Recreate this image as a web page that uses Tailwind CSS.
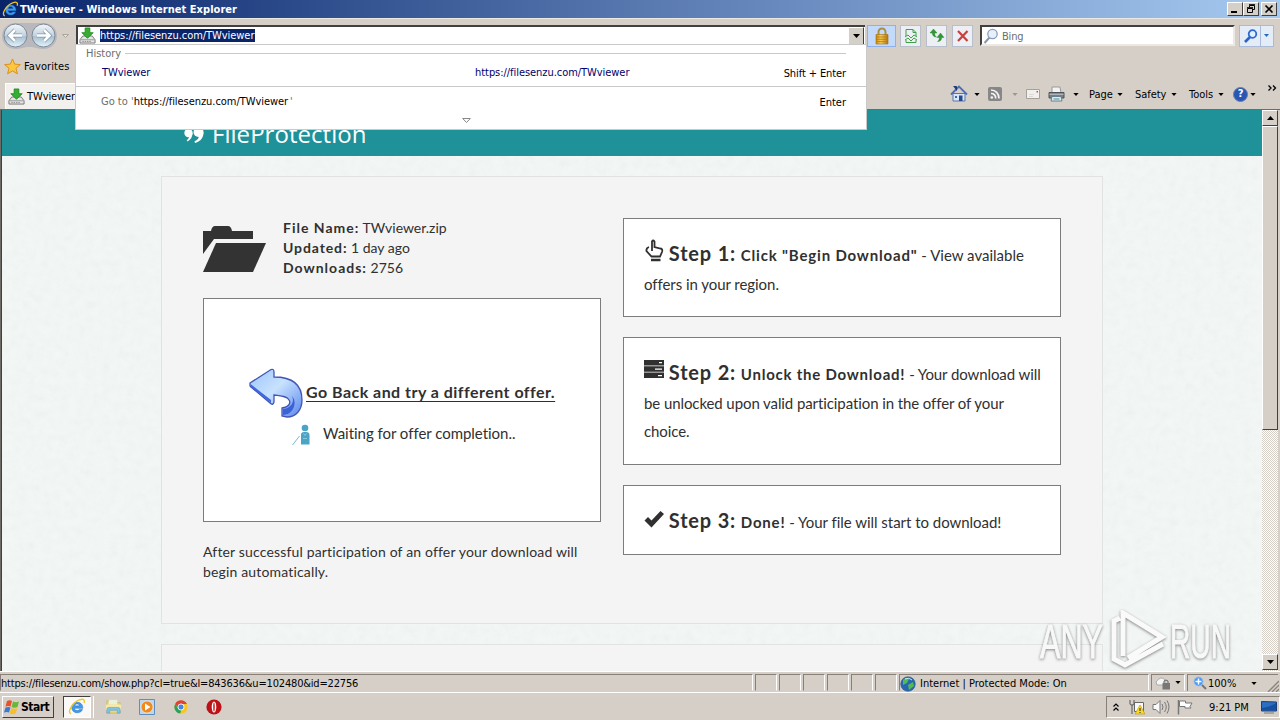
<!DOCTYPE html>
<html lang="en">
<head>
    <meta charset="UTF-8">
    <meta name="viewport" content="width=device-width, initial-scale=1.0">
    <title>TWviewer - Windows Internet Explorer</title>
    <script src="https://cdn.jsdelivr.net/npm/@tailwindcss/browser@4"></script>
</head>
<body class="overflow-hidden">
<svg class="absolute h-0 w-0">
    <defs>
        <linearGradient id="blueArrow" x1="0" y1="0" x2="1" y2="1"><stop offset="0" stop-color="#9cc4fb"/><stop offset=".45" stop-color="#c8e2fe"/><stop offset="1" stop-color="#5a86ee"/></linearGradient>
        <linearGradient id="ball" x1="0" y1="0" x2="0" y2="1"><stop offset="0" stop-color="#f4f7fa"/><stop offset=".5" stop-color="#c3d2df"/><stop offset=".55" stop-color="#a9c0d2"/><stop offset="1" stop-color="#e4f4fb"/></linearGradient>
        <linearGradient id="gold" x1="0" y1="0" x2="1" y2="0"><stop offset="0" stop-color="#c98a14"/><stop offset=".4" stop-color="#f7cf57"/><stop offset="1" stop-color="#b87609"/></linearGradient>
    </defs>
    <symbol id="ie" viewBox="0 0 20 20">
        <path d="M16.5 11.500H7.200c.3 2.700 3.700 3.400 5.300 1.300h3.600c-1.900 5.300-11.900 5-12-2.300C4 3 16.800 2.200 16.500 11.500zM7.300 8.700h5.600c-.4-2.700-5.100-2.800-5.600 0z" fill="#3d9cf0" stroke="#1a62b5" stroke-width=".5"/>
        <path d="M3.300 17.500C-1.500 16 5 5 12.500 2.200c5-2 6.500.2 5.300 3.300" fill="none" stroke="#f3c61f" stroke-width="1.500"/>
    </symbol>
    <symbol id="dl" viewBox="0 0 18 18">
        <path d="M4 9.500h10l3 4v3.500H1v-3.500z" fill="#e4e4e4" stroke="#777"/>
        <path d="M1.500 13.500h15" stroke="#999"/>
        <path d="M3.500 15.300h9" stroke="#888" stroke-dasharray="1.500 1"/>
        <path d="M6.500 1h5v5H15l-6 6-6-6h3.500z" fill="#35ae32" stroke="#168317" stroke-width=".8"/>
    </symbol>
    <symbol id="down" viewBox="0 0 7 4"><path d="M0 0h7L3.500 4z" fill="currentColor"/></symbol>
</svg>

<div class="relative flex h-[720px] w-[1280px] flex-col overflow-hidden bg-[#d6cfc8] font-['DejaVu_Sans_Condensed','DejaVu_Sans',sans-serif] text-[11px] leading-[14px] text-black">

    <!-- title bar -->
    <header class="flex h-[18px] shrink-0 items-center bg-linear-to-r from-[#0a246a] via-[#5878b0] to-[#a6caf0] pl-[2px] pr-[3px]">
        <svg class="h-[17px] w-[17px]"><use href="#ie"/></svg>
        <h1 class="ml-px mt-px w-[220px] whitespace-nowrap font-bold text-white tracking-[0.04px]">TWviewer - Windows Internet Explorer</h1>
        <div class="ml-auto flex items-center">
            <span class="flex h-[14px] w-4 border border-t-white border-l-white border-r-[#404040] border-b-[#404040] bg-[#d4d0c8]"><svg viewBox="0 0 14 12" class="h-3 w-[14px]"><path d="M3 9h6" stroke="#000" stroke-width="2"/></svg></span>
            <span class="flex h-[14px] w-4 border border-t-white border-l-white border-r-[#404040] border-b-[#404040] bg-[#d4d0c8]"><svg viewBox="0 0 14 12" class="h-3 w-[14px]"><path d="M5.500 4V2.500h5v4H9M3.500 5.500h5v4h-5zM5 1.700h6M3 4.700h6" fill="none" stroke="#000"/></svg></span>
            <span class="ml-[2px] flex h-[14px] w-4 border border-t-white border-l-white border-r-[#404040] border-b-[#404040] bg-[#d4d0c8]"><svg viewBox="0 0 14 12" class="h-3 w-[14px]"><path d="M3.500 2.500l7 7m0-7l-7 7" stroke="#000" stroke-width="1.700"/></svg></span>
        </div>
    </header>

    <!-- address row -->
    <div class="flex h-[34px] shrink-0 items-center border-t border-[#ece8e2]">
        <svg viewBox="0 0 76 32" class="h-8 w-[76px] shrink-0">
            <path d="M15 3h29a13 13 0 0 1 0 26c-8 0-8-2-14.500-2S22 29 15 29A13 13 0 0 1 15 3z" fill="#b9b9bd"/>
            <circle cx="15.500" cy="15.500" r="11.500" fill="url(#ball)" stroke="#7c8894"/>
            <circle cx="43.500" cy="15.500" r="11.500" fill="url(#ball)" stroke="#7c8894"/>
            <path d="M22 15.500H10m5-5.500L9.500 15.500l5.500 5.500M37 15.500h12m-5-5.500l5.500 5.500-5.500 5.500" fill="none" stroke="#8196a8" stroke-width="4"/>
            <path d="M22 15.500H10m5-5.500L9.500 15.500l5.500 5.500M37 15.500h12m-5-5.500l5.500 5.500-5.500 5.500" fill="none" stroke="#fff" stroke-width="2.600"/>
            <path d="M62.500 14.500h6l-3 3z" fill="#e6e2dc" stroke="#aaa59d"/>
        </svg>
        <div class="flex h-[21px] w-[789px] shrink-0 items-center border-2 border-t-[#404040] border-l-[#404040] border-r-0 border-b-[#d4d0c8] bg-white">
            <svg class="ml-px h-[17px] w-[17px]"><use href="#dl"/></svg>
            <span class="ml-[4px] w-[155px] whitespace-nowrap bg-[#0a246a] text-white leading-[13px] tracking-[-0.05px]">https://filesenzu.com/TWviewer</span>
            <span class="ml-auto mr-px flex h-[18px] w-4 shrink-0 items-center justify-center border border-t-white border-l-white border-r-[#404040] border-b-[#404040] bg-[#d4d0c8]"><svg class="h-1 w-[7px]"><use href="#down"/></svg></span>
        </div>
        <span class="ml-[2px] flex h-[22px] w-[29px] items-center justify-center border border-[#8fb0ea] bg-[#c4dafb]">
            <svg viewBox="0 0 16 18" class="h-[18px] w-4"><path d="M4.500 8V5a3.500 3.500 0 0 1 7 0v3" fill="none" stroke="#a88f45" stroke-width="2"/><path d="M2 7.500h12V17H2z" fill="url(#gold)" stroke="#a86d08" stroke-width=".6"/><path d="M2 10h12M2 12.300h12M2 14.600h12" stroke="#b5770c" stroke-width=".8"/></svg>
        </span>
        <div class="ml-[4px] flex gap-[5px]">
            <span class="flex h-[22px] w-[21px] items-center justify-center border border-[#b9bfca] bg-[#eceff3]"><svg viewBox="0 0 16 16" class="h-4 w-4" fill="none" stroke="#41a049"><path d="M3 8V1.500h7L13 4.500V8M3 12v2.500h10V12M10 1.500v3h3"/><path d="M2 9l3-2 3 3 3-3 3 2M2 12l3-2 3 3 3-3 3 2"/></svg></span>
            <span class="flex h-[22px] w-[21px] items-center justify-center border border-[#b9bfca] bg-[#eceff3]"><svg viewBox="0 0 16 16" class="h-4 w-4 overflow-visible" fill="#2f9a33" stroke="#217c23" stroke-width=".4"><path d="M4.500 1L8 5H5.700c0 2 .3 3 1.800 4-2.800 0-4-1.200-4.200-4H1z"/><path d="M11.500 15L8 10.500h2.300c0-2-.3-3-1.800-4 2.800 0 4 1.200 4.200 4H15z" transform="matrix(1 0 0 -1 0 20)"/></svg></span>
            <span class="flex h-[22px] w-[21px] items-center justify-center border border-[#b9bfca] bg-[#eceff3]"><svg viewBox="0 0 16 16" class="h-4 w-4"><path d="M3 3l9.500 10m0-10L3 13" stroke="#c9403c" stroke-width="2.200"/></svg></span>
        </div>
        <div class="ml-[7px] flex h-[21px] w-[255px] items-center border-2 border-t-[#404040] border-l-[#404040] border-r-[#ece9e4] border-b-[#ece9e4] bg-white">
            <svg viewBox="0 0 16 16" class="ml-px h-4 w-4"><path d="M6.500 9.500L1.500 15" stroke="#8a97a8" stroke-width="2"/><circle cx="9.500" cy="6" r="4.700" fill="#e6f1fb" stroke="#8b9dbb" stroke-width="1.300"/></svg>
            <span class="ml-[3px] mt-[2px] tracking-[-0.2px] text-[#6d6d6d]">Bing</span>
        </div>
        <span class="ml-[4px] flex h-[22px] w-[35px] items-center border border-[#a9bbd6] bg-[#e4ecf8]">
            <svg viewBox="0 0 16 16" class="ml-[3px] h-4 w-4"><path d="M7 9l-5 5" stroke="#2b62c9" stroke-width="2.600"/><circle cx="9.500" cy="6" r="3.800" fill="#dff0ff" stroke="#2f69cd" stroke-width="1.800"/></svg>
            <span class="ml-px flex h-5 w-3 items-center justify-center border-l border-[#a9bbd6] text-[#2569bd]"><svg class="h-[3px] w-[5px]" viewBox="0 0 7 4"><use href="#down"/></svg></span>
        </span>
    </div>

    <!-- favorites row -->
    <div class="flex h-[28px] shrink-0 items-center pl-1">
        <svg viewBox="0 0 18 18" class="h-[17px] w-[17px]"><path d="M9 1l2.300 5.500 6 .5-4.600 3.900 1.500 5.800L9 13.600l-5.200 3.100 1.500-5.800L.7 7l6-.5z" fill="#fcc73c" stroke="#d98d16"/></svg>
        <span class="ml-[3px] mt-px tracking-[0.1px]">Favorites</span>
    </div>

    <!-- tabs and command bar -->
    <div class="flex h-[29px] shrink-0">
        <div class="ml-[5px] mt-[3px] flex h-[26px] w-[150px] items-center border-l border-t border-white bg-[#f3f1ee] pl-[2px]">
            <svg class="h-[17px] w-[17px]"><use href="#dl"/></svg>
            <span class="ml-[2px] tracking-[-0.1px]">TWviewer</span>
        </div>
        <div class="ml-[793px] mt-[4px] flex h-5 w-[332px] items-center">
            <svg viewBox="0 0 18 18" class="ml-[2px] h-[18px] w-[18px]"><path d="M3 8.500h12V16H3z" fill="#d8e4f7" stroke="#5876ad"/><path d="M1 9.500l8-8 8 8" fill="none" stroke="#4b6fb5" stroke-width="1.800"/><path d="M3.500 1.500h3v4" stroke="#203a78" fill="#203a78"/><path d="M9 10.500h3.500V16H9z" fill="#26488d"/><path d="M5 11h2v2H5z" fill="#3b69b8"/></svg>
            <svg class="ml-[6px] h-[3px] w-[6px]"><use href="#down"/></svg>
            <svg viewBox="0 0 14 14" class="ml-[8px] h-[14px] w-[14px]"><rect width="14" height="14" rx="2" fill="#878787"/><g fill="none" stroke="#f3f3f3" stroke-width="1.700"><path d="M3 3c4.500 0 8 3.500 8 8.500M3 6.500c3 0 4.700 2 4.700 5"/></g><circle cx="3.800" cy="10.500" r="1.300" fill="#f3f3f3"/></svg>
            <svg class="ml-[10px] h-[3px] w-[6px] text-[#9c9790]"><use href="#down"/></svg>
            <svg viewBox="0 0 14 10" class="ml-[8px] h-[10px] w-[14px]"><path d="M.5.500h13v9H.5z" fill="#f2f0ee" stroke="#a5a09c"/><path d="M10.500 2h1.500v1.500h-1.500z" fill="#cc4a48"/><path d="M3 5.500h5M3 7.500h4" stroke="#dcd9d4"/></svg>
            <svg viewBox="0 0 17 16" class="ml-[8px] h-4 w-[17px]"><path d="M4 1h8l1 6H4z" fill="#f3f3f3" stroke="#999"/><path d="M1 6.500h15V12H1z" fill="#777f86" stroke="#4d5359"/><path d="M1.500 8.300h14" stroke="#bec3c7"/><path d="M4 10.500h9l1 4.500H3z" fill="#d9eef6" stroke="#6f7f88"/><path d="M5.500 13h6" stroke="#3f8ca8"/></svg>
            <svg class="ml-[8px] h-[3px] w-[6px]"><use href="#down"/></svg>
            <span class="ml-[10px] mt-px w-[26px]">Page</span><svg class="ml-[2px] h-[3px] w-[6px]"><use href="#down"/></svg>
            <span class="ml-[12px] mt-px w-[32px] tracking-[-0.05px]">Safety</span><svg class="ml-[4px] h-[3px] w-[6px]"><use href="#down"/></svg>
            <span class="ml-[12px] mt-px w-[26px]">Tools</span><svg class="ml-[3px] h-[3px] w-[6px]"><use href="#down"/></svg>
            <span class="ml-[9px] flex h-[15px] w-[15px] items-center justify-center rounded-full border border-[#6c7ea6] bg-[#2856b4] font-bold text-white">?</span>
            <svg class="ml-[2px] h-[3px] w-[6px]"><use href="#down"/></svg>
            <svg viewBox="0 0 9 6" class="mb-[13px] ml-auto mr-[3px] h-[6px] w-[9px] shrink-0" fill="none" stroke="#000" stroke-width="1.300"><path d="M.5.500L3 3 .5 5.500M5 .5L7.500 3 5 5.500"/></svg>
        </div>
    </div>

    <!-- page viewport -->
    <main class="flex h-[562px] shrink-0 border-t border-l border-[#6e6a66] font-['Lato',sans-serif] text-[#303030] [font-variant-ligatures:none]">
        <div class="relative flex-1 overflow-hidden border-l border-[#404040] bg-[#f3f7f6]">
            <svg class="absolute inset-0 h-full w-full opacity-7"><filter id="paper"><feTurbulence type="fractalNoise" baseFrequency=".12" numOctaves="3" seed="4"/><feColorMatrix type="saturate" values="0"/></filter><rect width="100%" height="100%" filter="url(#paper)"/></svg>
            <div class="relative flex h-[46px] bg-[#1f9199] pl-[181px] pt-[8px] text-white">
                <svg viewBox="0 0 20 20" class="mt-[6px] h-5 w-[22px]"><circle cx="4.500" cy="9" r="4.200" fill="#fff"/><path d="M8.500 9c0 4-2 7-5 8.500l-.8-1.300C4.500 15 5.500 13 5.500 11z" fill="#fff"/><circle cx="14.500" cy="8" r="5" fill="#fff"/><path d="M19.500 8c.3 5-2.500 9.500-8.500 11l-.5-1.700c3-1 4.500-3 4.500-6z" fill="#fff"/></svg>
                <span class="ml-[7px] font-['Open_Sans',sans-serif] text-[24px] leading-8 tracking-[0.04px]">FileProtection</span>
            </div>
            <section class="relative ml-[159px] mt-5 flex h-[448px] w-[942px] gap-[22px] border border-[#e1e3e3] bg-[#f4f4f4] pl-[41px] pt-[41px]">
                <div class="w-[398px] shrink-0">
                    <div class="flex h-20 text-[14px] leading-5">
                        <svg viewBox="0 0 63 48" class="mt-[7px] h-12 w-[63px]" fill="#333"><path d="M0 6h8q1-5 4-5h13q3 0 4 5h21v8H11L0 29z"/><path d="M13 18h50L50 47H0z"/></svg>
                        <div class="ml-[17px]">
                            <p><b class="tracking-[1px]">File Name:</b> TWviewer.zip</p>
                            <p><b class="tracking-[0.9px]">Updated:</b> 1 day ago</p>
                            <p><b class="tracking-[1px]">Downloads:</b> 2756</p>
                        </div>
                    </div>
                    <div class="h-[224px] border border-[#7c7c7c] bg-white pl-[45px] pt-[68px] text-[15px]">
                        <div class="flex h-[52px] items-center">
                            <svg viewBox="0 0 54 52" class="h-[52px] w-[54px]"><path d="M1 16v4l22 17 1-9z" fill="#4a6fdc"/><path d="M1 16L22 2.500q3-1 3 2.500v5c18 0 28 7 28 23 0 10-6 17-15 17l-5-1v-8c7-1 9-5 7-8-2-4-8-4-15-5v7q-1 4-4 1L1 19z" fill="url(#blueArrow)" stroke="#4255b5" stroke-width="1.300"/><path d="M1.500 17L22 33v3L2 20z" fill="#4267dd"/><path d="M34 42c8-1 12-7 9-13 4 4 4 13-4 18l-5 1z" fill="#3a63d8"/></svg>
                            <a class="mb-[2px] ml-[3px] whitespace-nowrap text-[16px] font-bold tracking-[0.47px] underline underline-offset-[3px]">Go Back and try a different offer.</a>
                        </div>
                        <div class="flex h-[28px] items-center pl-[42px]">
                            <svg viewBox="0 0 22 22" class="mt-1 h-[22px] w-[22px]"><circle cx="14" cy="4" r="3.300" fill="#4ba3c5"/><path d="M10 11q0-3 3-3h2q3.500 0 3.500 3v9.500H10z" fill="#4ba3c5"/><path d="M12.500 9.500l1.500 2 1.500-2M12 14.500h4" fill="none" stroke="#a8d8e8" stroke-width=".7"/><path d="M8.500 12L1.500 21" stroke="#79b7d4"/></svg>
                            <span class="ml-[10px] whitespace-nowrap tracking-[-0.03px]">Waiting for offer completion..</span>
                        </div>
                    </div>
                    <p class="mt-5 text-[14px] leading-5 tracking-[0.16px]">After successful participation of an offer your download will begin automatically.</p>
                </div>
                <div class="flex w-[438px] shrink-0 flex-col gap-5 text-[15px] leading-[28.57px]">
                    <div class="h-[99px] border border-[#7c7c7c] bg-white py-5 pl-5 pr-4">
                        <svg viewBox="0 0 20 24" class="-mt-[14px] mr-px inline h-6 w-5" fill="none" stroke="#303030" stroke-width="1.800"><path d="M8 13V3.500q1-2 2.500 0V9l6 1.500q2.500.5 1.500 3.500l-2 4.500H7.500L2.500 13Q2 10 5 9"/><path d="M7 22H16.500" stroke-width="2.500"/></svg>
                        <b class="mr-px text-[20px] tracking-[0.8px]">Step 1:</b> <b class="tracking-[0.82px]">Click "Begin Download"</b> - View available <span class="tracking-[-0.05px]">offers in your region.</span>
                    </div>
                    <div class="h-[128px] border border-[#7c7c7c] bg-white py-5 pl-5 pr-4">
                        <svg viewBox="0 0 20 18" class="-mt-[14px] mr-px inline h-[18px] w-5" fill="#303030"><path d="M0 0h20v5.500H0zM0 6.300h20v5.500H0zM0 12.500h20V18H0z"/><path d="M15 2h3v1.300h-3zM11 8.500h7v1.200h-7zM14 15h4v1.200h-4z" fill="#fff"/></svg>
                        <b class="mr-px text-[20px] tracking-[0.8px]">Step 2:</b> <b class="tracking-[0.76px]">Unlock the Download!</b> <span class="tracking-[-0.09px]">- Your download will be unlocked upon valid participation in the offer of your choice.</span>
                    </div>
                    <div class="h-[70px] border border-[#7c7c7c] bg-white py-5 pl-5 pr-4">
                        <svg viewBox="0 0 20 18" class="-mt-[10px] mr-px inline h-[18px] w-5" fill="#303030"><path d="M.5 10.500L4 7l3.500 3.500L16.500 1l3.500 3L7.500 17.500z"/></svg>
                        <b class="mr-px text-[20px] tracking-[0.8px]">Step 3:</b> <b class="tracking-[0.8px]">Done!</b> <span class="tracking-[-0.03px]">- Your file will start to download!</span>
                    </div>
                </div>
            </section>
            <section class="relative ml-[159px] mt-5 h-[60px] w-[942px] border border-[#e1e3e3] bg-[#f4f4f4]"></section>
            <!-- watermark -->
            <svg viewBox="0 0 204 64" class="absolute left-[1034px] top-[500px] h-16 w-[204px] [filter:drop-shadow(0_1px_1.5px_#0007)]">
                <g fill="#f8f8f8" stroke="#f8f8f8" font-family="'Liberation Sans Narrow','Liberation Sans',sans-serif" font-size="49">
                    <text x="4" y="48" textLength="63" lengthAdjust="spacingAndGlyphs">ANY</text>
                    <text x="134" y="48" textLength="61" lengthAdjust="spacingAndGlyphs">RUN</text>
                </g>
                <path d="M84 8l-6 3v38l11 6 38-21M87 46V3l39 24-34 21" fill="none" stroke="#fafafa" stroke-width="5"/>
            </svg>
        </div>
        <div class="mr-[2px] flex w-4 flex-col bg-[repeating-conic-gradient(#fff_0_25%,#d6cfc8_0_50%)] bg-size-[2px_2px]">
            <span class="flex h-4 items-center justify-center border border-t-white border-l-white border-r-[#404040] border-b-[#404040] bg-[#d6cfc8] text-black"><svg class="h-1 w-[7px] rotate-180"><use href="#down"/></svg></span>
            <span class="h-[304px] border border-t-white border-l-white border-r-[#404040] border-b-[#404040] bg-[#d6cfc8]"></span>
            <span class="mb-px mt-auto flex h-4 items-center justify-center border border-t-white border-l-white border-r-[#404040] border-b-[#404040] bg-[#d6cfc8] text-black"><svg class="h-1 w-[7px]"><use href="#down"/></svg></span>
        </div>
    </main>

    <!-- status bar -->
    <div class="flex h-[22px] shrink-0 gap-[2px] border-t border-b border-white pb-px pt-[2px]">
        <span class="flex w-[753px] items-center whitespace-nowrap border border-t-[#868079] border-l-[#868079] border-r-white border-b-[#d6cfc8] pt-[2px] tracking-[-0.18px]">https://filesenzu.com/show.php?cl=true&amp;l=843636&amp;u=102480&amp;id=22756</span>
        <span class="w-[22px] border border-t-[#868079] border-l-[#868079] border-r-white border-b-[#d6cfc8]"></span>
        <span class="w-[22px] border border-t-[#868079] border-l-[#868079] border-r-white border-b-[#d6cfc8]"></span>
        <span class="w-[22px] border border-t-[#868079] border-l-[#868079] border-r-white border-b-[#d6cfc8]"></span>
        <span class="w-[22px] border border-t-[#868079] border-l-[#868079] border-r-white border-b-[#d6cfc8]"></span>
        <span class="w-[22px] border border-t-[#868079] border-l-[#868079] border-r-white border-b-[#d6cfc8]"></span>
        <span class="w-[22px] border border-t-[#868079] border-l-[#868079] border-r-white border-b-[#d6cfc8]"></span>
        <span class="flex w-[250px] items-center whitespace-nowrap border border-t-[#868079] border-l-[#868079] border-r-white border-b-[#d6cfc8] pt-[2px]">
            <svg viewBox="0 0 16 16" class="mr-1 h-4 w-4"><circle cx="8" cy="8" r="7.300" fill="#2467b5" stroke="#3c5a78" stroke-width=".6"/><path d="M3 4q4-4 6-1L7 7 3 9zM8 9l5-3 1 4-5 4z" fill="#57b952"/><path d="M5 3q4-2 7 1" stroke="#c9ecfa" fill="none"/></svg>
            Internet | Protected Mode: On
        </span>
        <span class="flex w-[34px] items-center border border-t-[#868079] border-l-[#868079] border-r-white border-b-[#d6cfc8] pl-[3px]">
            <svg viewBox="0 0 16 14" class="h-[14px] w-4"><path d="M1 6q5-7 9-2v5H2z" fill="#f5f5f5" stroke="#aaa"/><path d="M9 7V5q2-2 4 0v2" fill="none" stroke="#666"/><path d="M7.500 7H15v6.500H7.500z" fill="#777"/></svg>
            <svg class="ml-[4px] h-[3px] w-[6px]"><use href="#down"/></svg>
        </span>
        <span class="flex w-[91px] items-center border-t border-l border-[#868079] pl-[5px]">
            <svg viewBox="0 0 14 14" class="h-[14px] w-[14px]"><path d="M8 8l5 5" stroke="#777" stroke-width="2"/><circle cx="5.500" cy="5.500" r="4.700" fill="#4b9af0" stroke="#b9c9dd"/><path d="M5.500 2.500v6m-3-3h6" stroke="#fff" stroke-width="1.500"/></svg>
            <span class="ml-px mt-px w-[29px]">100%</span>
            <svg class="ml-[14px] h-[3px] w-[6px]"><use href="#down"/></svg>
            <svg viewBox="0 0 12 12" class="-mr-px ml-auto mt-[6px] h-3 w-3" stroke="#8a847c" stroke-width="1.300"><path d="M1 12L12 1M5 12l7-7M9 12l3-3"/></svg>
        </span>
    </div>

    <!-- taskbar -->
    <footer class="flex h-[27px] shrink-0 items-center pl-[2px]">
        <span class="flex h-[22px] w-[52px] items-center border border-t-white border-l-white border-r-[#404040] border-b-[#404040] bg-[#d6cfc8] text-[12px] font-bold">
            <svg viewBox="0 0 16 16" class="ml-px h-4 w-4"><path d="M3 2q3-1.500 5 0L6.500 7.500q-2-1-5 0z" fill="#e8512a"/><path d="M9 2.500q3 1.500 6 0L13.500 8q-3 1.500-6 0z" fill="#69b63c"/><path d="M1.500 8.500q3-1 5 0L5 13.500q-2-1-5 0z" fill="#3d78d3"/><path d="M7.200 9q3 1.500 6 0l-1.500 5.500q-3 1.500-6 0z" fill="#f7bf2a"/></svg>
            <span class="ml-px tracking-[-0.5px]">Start</span>
        </span>
        <span class="ml-[9px] flex h-[22px] w-[28px] items-center justify-center border border-t-[#404040] border-l-[#404040] border-r-white border-b-white bg-[#faf9f7]"><svg class="h-[18px] w-[18px]"><use href="#ie"/></svg></span>
        <i class="ml-[2px] h-[22px] w-px bg-white"></i>
        <svg viewBox="0 0 18 18" class="ml-[11px] h-[17px] w-[17px]"><path d="M2 3h5l1 2h8v11H2z" fill="#efd67a" stroke="#c8a94a" stroke-width=".6"/><path d="M4 2h9v5H4z" fill="#e8f1da"/><path d="M1 7h16v6H1z" fill="#f7e9a7"/><path d="M2 16v-4q0-2 2-2h10q2 0 2 2v4h-3v-3H5v3z" fill="#7ec3e8" stroke="#55a0cb" stroke-width=".6"/></svg>
        <svg viewBox="0 0 16 16" class="ml-[17px] h-4 w-4"><path d="M.5.500h15v15H.5z" fill="#bcd6ee" stroke="#5f8fbe"/><circle cx="8" cy="8" r="6" fill="#f18a1d" stroke="#fff" stroke-width=".5"/><path d="M6 4.500L11.500 8 6 11.500z" fill="#fff"/></svg>
        <svg viewBox="0 0 16 16" class="ml-[19px] h-[14px] w-[14px]"><circle cx="8" cy="8" r="7.500" fill="#fbc51f"/><path d="M1.300 4.500a7.500 7.500 0 0 1 13.400 0H8L5 9.500z" fill="#dd4236"/><path d="M1.300 4.500L5 10l3.500 1.500-1.500 4A7.500 7.500 0 0 1 1.300 4.500z" fill="#27a355"/><circle cx="8" cy="8" r="3.500" fill="#4286e8" stroke="#fff"/></svg>
        <svg viewBox="0 0 16 16" class="ml-[18px] h-4 w-4"><circle cx="8" cy="8" r="7.600" fill="#bb1117"/><ellipse cx="8" cy="8" rx="2.300" ry="5.500" fill="#fff"/><ellipse cx="8" cy="8" rx=".8" ry="4.500" fill="#c22"/></svg>
        <div class="ml-auto flex h-[22px] w-[174px] items-center border border-t-[#868079] border-l-[#868079] border-r-white border-b-white">
            <svg viewBox="0 0 6 8" class="ml-[6px] h-2 w-[6px]" fill="none" stroke="#000" stroke-width="1.200"><path d="M.5 3.500L3 1l2.500 2.500M.5 7.500L3 5l2.500 2.500"/></svg>
            <svg viewBox="0 0 16 16" class="ml-[10px] h-4 w-4"><path d="M5.500 3.500h9v9h-9z" fill="#f8f8f8" stroke="#666"/><path d="M1 1v4q0 1 2 1V15M5 1v4q0 1-2 1" fill="none" stroke="#555"/><path d="M11 6l5 9H6z" fill="#ffd91f" stroke="#b39300" stroke-width=".6"/><path d="M11 9v3m0 1v1" stroke="#222"/></svg>
            <svg viewBox="0 0 18 16" class="ml-[7px] h-4 w-[18px]" fill="none" stroke="#777"><path d="M1 5.500h3l4-4v13l-4-4H1z" fill="#fafafa"/><path d="M10 5q2 3 0 6M12.500 3q3.500 5 0 10M15 1.500q4 6.500 0 13"/></svg>
            <svg viewBox="0 0 16 16" class="ml-[7px] h-4 w-4"><path d="M1.500 1v14.500" stroke="#777" stroke-width="1.500"/><path d="M2.500 2h6v2H15l-2 3.500 1 1.500H8V7.500H2.500z" fill="#fff" stroke="#777"/></svg>
            <span class="ml-[16px] mt-[2px] whitespace-nowrap">9:21 PM</span>
            <svg viewBox="0 0 16 14" class="ml-auto mr-[2px] h-[14px] w-4 shrink-0"><path d="M.5 1.500l15 .5v9H.5z" fill="#2b6fc4" stroke="#1b3f78"/><path d="M1 8q8-1 14-5v7H1z" fill="#184f9f"/><path d="M3 13h10" stroke="#777"/></svg>
        </div>
    </footer>

    <!-- address suggestions -->
    <div class="absolute left-[75px] top-[44px] h-[86px] w-[792px] border border-[#c9c9c9] bg-white">
        <div class="flex h-[17px] items-center gap-1 pl-[10px] pr-5 text-[#6d6d6d]">History <i class="h-px flex-1 bg-[#c9c9c9]"></i></div>
        <div class="flex h-[25px] items-center border-b border-[#c9c9c9] pb-[3px] pl-[26px] pr-5 text-[#00006e] tracking-[-0.05px]">
            <span class="w-[373px]">TWviewer</span><span>https://filesenzu.com/TWviewer</span><span class="ml-auto mt-[2px] text-black tracking-[-0.1px]">Shift + Enter</span>
        </div>
        <div class="flex h-[30px] items-center pl-[25px] pr-5">
            <span class="text-[#6d6d6d]">Go to '</span><span class="tracking-[-0.05px]">https://filesenzu.com/TWviewer</span><span class="ml-[2px] text-[#6d6d6d]">'</span><span class="ml-auto mt-px">Enter</span>
        </div>
        <svg viewBox="0 0 9 5" class="ml-[386px] mt-px h-[5px] w-[9px]"><path d="M.7.500h7.600L4.500 4.500z" fill="none" stroke="#888"/></svg>
    </div>
</div>
</body>
</html>
